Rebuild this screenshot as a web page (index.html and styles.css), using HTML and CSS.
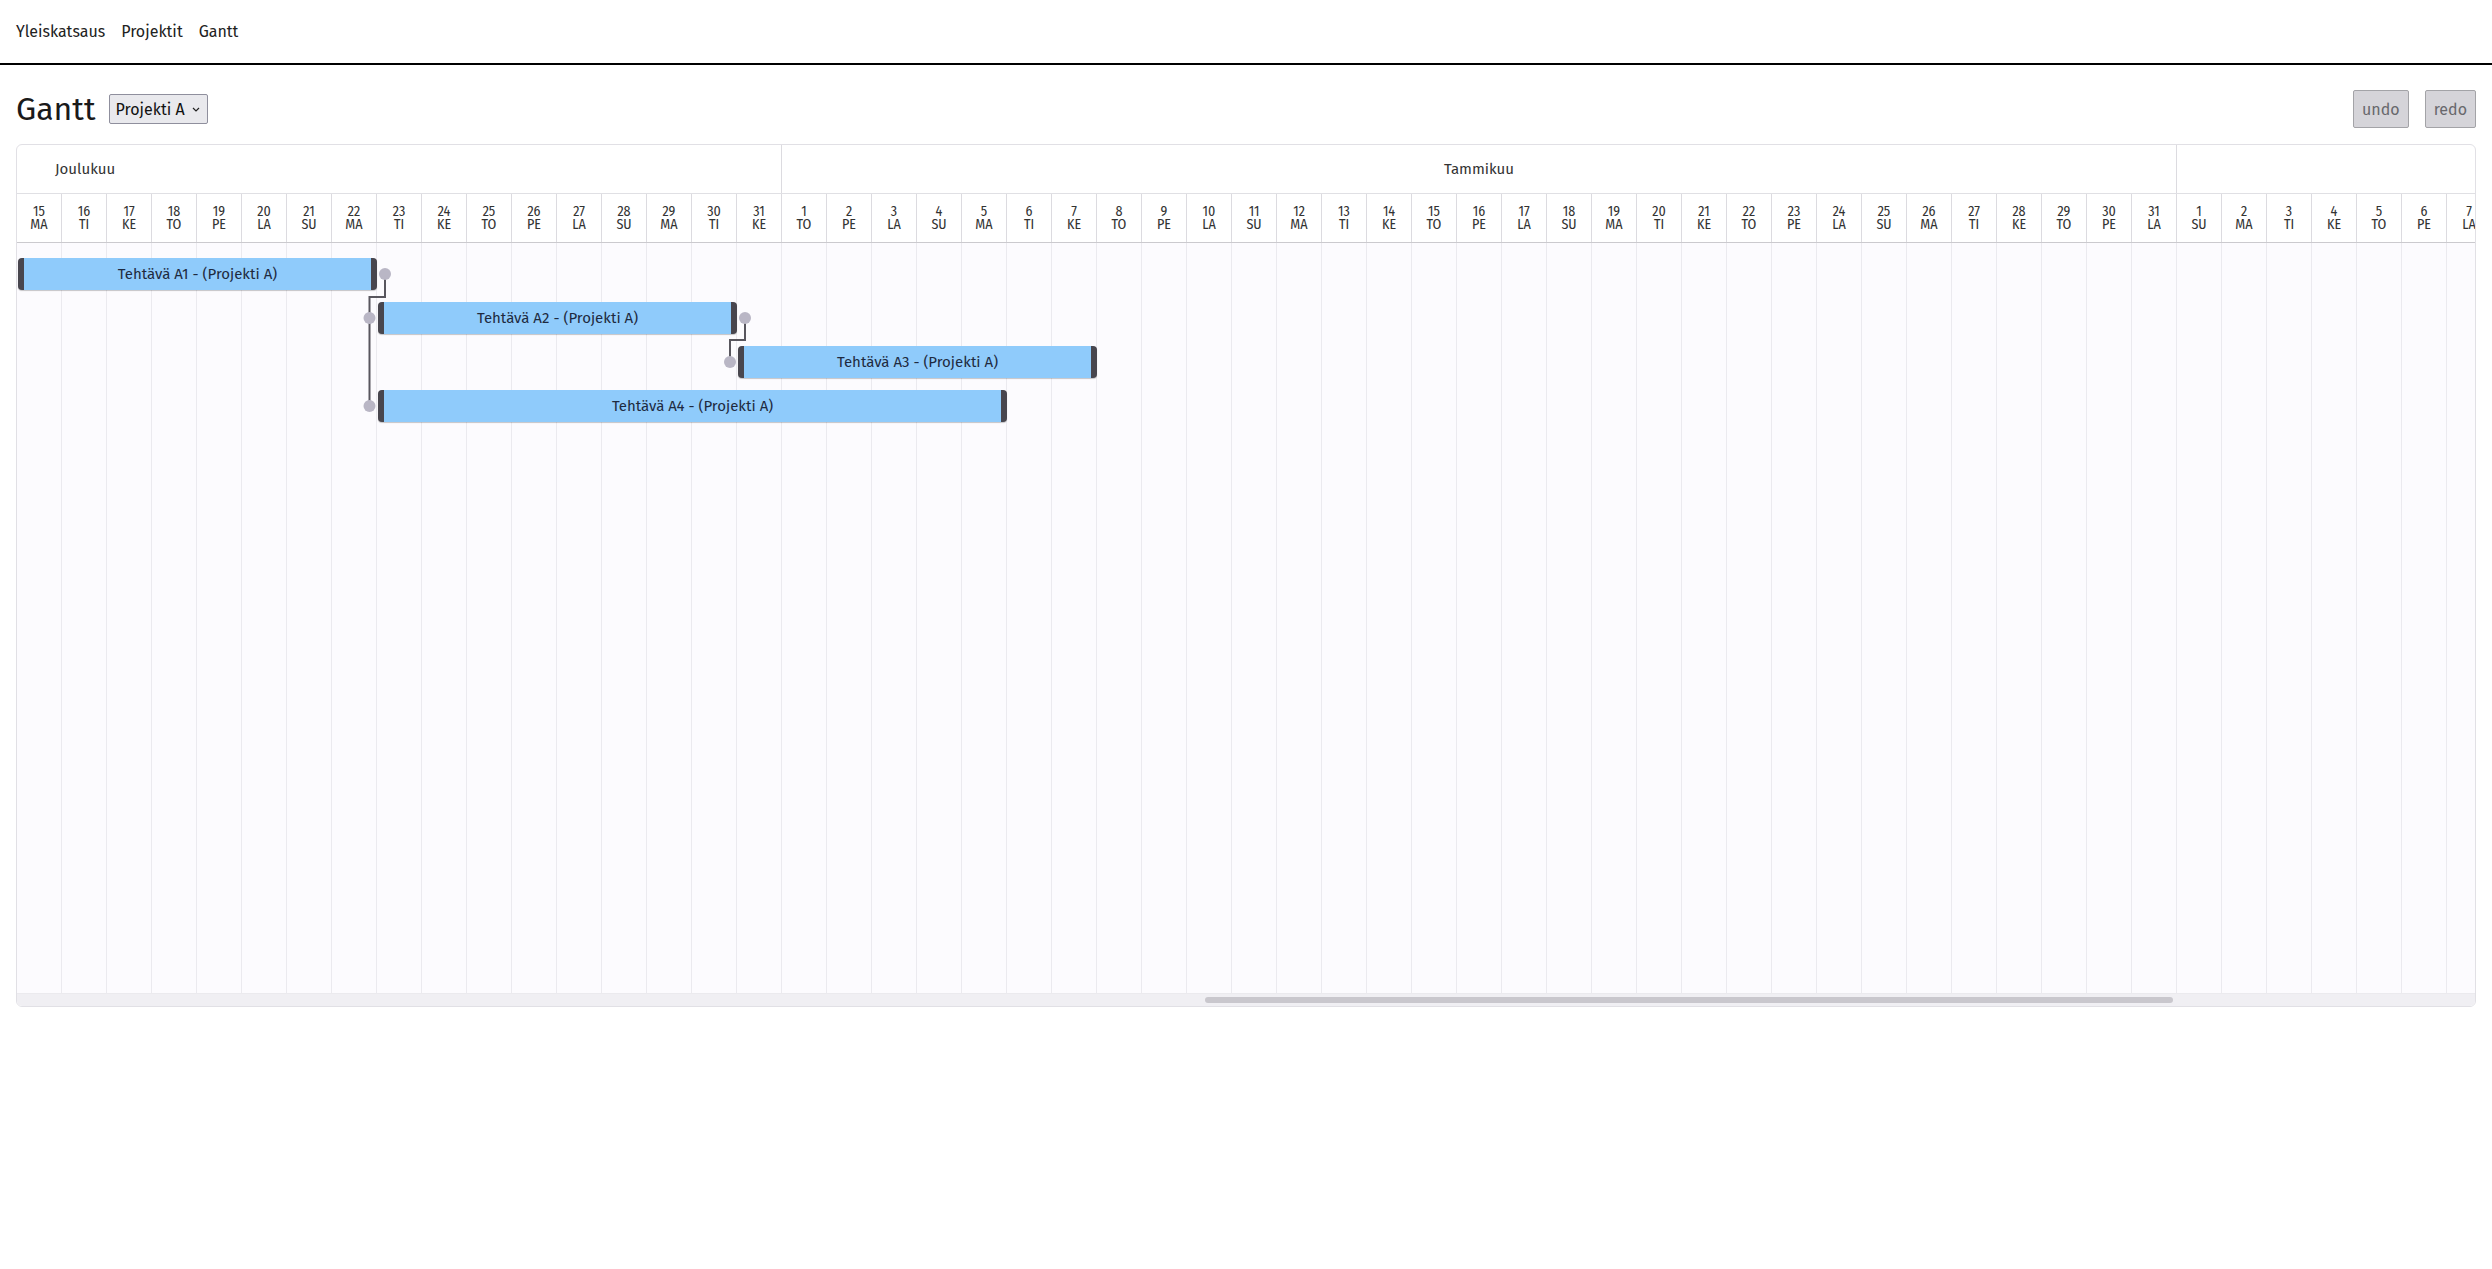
FILE: index.html
```html
<!DOCTYPE html>
<html lang="fi">
<head>
<meta charset="utf-8">
<title>Gantt</title>
<link rel="stylesheet" href="styles.css">
</head>
<body>
<nav class="topnav">
  <a href="#">Yleiskatsaus</a>
  <a href="#">Projektit</a>
  <a href="#">Gantt</a>
</nav>
<main class="page">
  <div class="toolbar">
    <h1 class="title">Gantt</h1>
    <select class="project-select"><option>Projekti A</option></select>
    <div class="spacer"></div>
    <button class="btn" disabled>undo</button>
    <button class="btn" disabled>redo</button>
  </div>
  <div class="gantt">
    <div class="gantt-scroll">
      <div class="months">
        <div class="month month-dec">Joulukuu</div>
        <div class="month month-jan">Tammikuu</div>
        <div class="month month-feb"></div>
      </div>
      <div class="days">
        <div class="day"><span class="dn">15</span><span class="dw">MA</span></div>
        <div class="day"><span class="dn">16</span><span class="dw">TI</span></div>
        <div class="day"><span class="dn">17</span><span class="dw">KE</span></div>
        <div class="day"><span class="dn">18</span><span class="dw">TO</span></div>
        <div class="day"><span class="dn">19</span><span class="dw">PE</span></div>
        <div class="day"><span class="dn">20</span><span class="dw">LA</span></div>
        <div class="day"><span class="dn">21</span><span class="dw">SU</span></div>
        <div class="day"><span class="dn">22</span><span class="dw">MA</span></div>
        <div class="day"><span class="dn">23</span><span class="dw">TI</span></div>
        <div class="day"><span class="dn">24</span><span class="dw">KE</span></div>
        <div class="day"><span class="dn">25</span><span class="dw">TO</span></div>
        <div class="day"><span class="dn">26</span><span class="dw">PE</span></div>
        <div class="day"><span class="dn">27</span><span class="dw">LA</span></div>
        <div class="day"><span class="dn">28</span><span class="dw">SU</span></div>
        <div class="day"><span class="dn">29</span><span class="dw">MA</span></div>
        <div class="day"><span class="dn">30</span><span class="dw">TI</span></div>
        <div class="day"><span class="dn">31</span><span class="dw">KE</span></div>
        <div class="day"><span class="dn">1</span><span class="dw">TO</span></div>
        <div class="day"><span class="dn">2</span><span class="dw">PE</span></div>
        <div class="day"><span class="dn">3</span><span class="dw">LA</span></div>
        <div class="day"><span class="dn">4</span><span class="dw">SU</span></div>
        <div class="day"><span class="dn">5</span><span class="dw">MA</span></div>
        <div class="day"><span class="dn">6</span><span class="dw">TI</span></div>
        <div class="day"><span class="dn">7</span><span class="dw">KE</span></div>
        <div class="day"><span class="dn">8</span><span class="dw">TO</span></div>
        <div class="day"><span class="dn">9</span><span class="dw">PE</span></div>
        <div class="day"><span class="dn">10</span><span class="dw">LA</span></div>
        <div class="day"><span class="dn">11</span><span class="dw">SU</span></div>
        <div class="day"><span class="dn">12</span><span class="dw">MA</span></div>
        <div class="day"><span class="dn">13</span><span class="dw">TI</span></div>
        <div class="day"><span class="dn">14</span><span class="dw">KE</span></div>
        <div class="day"><span class="dn">15</span><span class="dw">TO</span></div>
        <div class="day"><span class="dn">16</span><span class="dw">PE</span></div>
        <div class="day"><span class="dn">17</span><span class="dw">LA</span></div>
        <div class="day"><span class="dn">18</span><span class="dw">SU</span></div>
        <div class="day"><span class="dn">19</span><span class="dw">MA</span></div>
        <div class="day"><span class="dn">20</span><span class="dw">TI</span></div>
        <div class="day"><span class="dn">21</span><span class="dw">KE</span></div>
        <div class="day"><span class="dn">22</span><span class="dw">TO</span></div>
        <div class="day"><span class="dn">23</span><span class="dw">PE</span></div>
        <div class="day"><span class="dn">24</span><span class="dw">LA</span></div>
        <div class="day"><span class="dn">25</span><span class="dw">SU</span></div>
        <div class="day"><span class="dn">26</span><span class="dw">MA</span></div>
        <div class="day"><span class="dn">27</span><span class="dw">TI</span></div>
        <div class="day"><span class="dn">28</span><span class="dw">KE</span></div>
        <div class="day"><span class="dn">29</span><span class="dw">TO</span></div>
        <div class="day"><span class="dn">30</span><span class="dw">PE</span></div>
        <div class="day"><span class="dn">31</span><span class="dw">LA</span></div>
        <div class="day"><span class="dn">1</span><span class="dw">SU</span></div>
        <div class="day"><span class="dn">2</span><span class="dw">MA</span></div>
        <div class="day"><span class="dn">3</span><span class="dw">TI</span></div>
        <div class="day"><span class="dn">4</span><span class="dw">KE</span></div>
        <div class="day"><span class="dn">5</span><span class="dw">TO</span></div>
        <div class="day"><span class="dn">6</span><span class="dw">PE</span></div>
        <div class="day"><span class="dn">7</span><span class="dw">LA</span></div>
      </div>
      <div class="gantt-body">
        <div class="bar" style="grid-row: 1; grid-column: 1 / span 8;">Tehtävä A1 - (Projekti A)</div>
        <div class="bar" style="grid-row: 2; grid-column: 9 / span 8;">Tehtävä A2 - (Projekti A)</div>
        <div class="bar" style="grid-row: 3; grid-column: 17 / span 8;">Tehtävä A3 - (Projekti A)</div>
        <div class="bar" style="grid-row: 4; grid-column: 9 / span 14;">Tehtävä A4 - (Projekti A)</div>
        <svg class="links" width="2475" height="750" viewBox="0 0 2475 750">
          <path d="M368 31 V54 H352.5 V163" fill="none" stroke="#58565e" stroke-width="2"/>
          <path d="M728 75 V97 H713 V119" fill="none" stroke="#58565e" stroke-width="2"/>
          <circle cx="368" cy="31" r="6" fill="#b9b6c5"/>
          <circle cx="352.5" cy="75" r="6" fill="#b9b6c5"/>
          <circle cx="352.5" cy="163" r="6" fill="#b9b6c5"/>
          <circle cx="728" cy="75" r="6" fill="#b9b6c5"/>
          <circle cx="713" cy="119" r="6" fill="#b9b6c5"/>
        </svg>
      </div>
    </div>
    <div class="hscroll"><div class="thumb"></div></div>
  </div>
</main>
</body>
</html>
```

FILE: styles.css
```css
* { box-sizing: border-box; }

body {
  margin: 0;
  background: #ffffff;
  color: #222222;
  font-family: "Fira Sans", "Open Sans", "Noto Sans", sans-serif;
}

.topnav {
  display: flex;
  align-items: center;
  gap: 16px;
  height: 65px;
  padding: 0 16px;
  border-bottom: 2px solid #000000;
  font-size: 16px;
}

.topnav a {
  color: #222222;
  text-decoration: none;
}

.page {
  padding: 0 16px;
}

.toolbar {
  display: flex;
  align-items: center;
  height: 38px;
  margin-top: 25px;
  margin-bottom: 16px;
}

.title {
  margin: 0 14px 0 0;
  font-size: 32px;
  font-weight: 400;
  line-height: 38px;
  color: #1a1a1a;
}

.project-select {
  appearance: none;
  -webkit-appearance: none;
  width: 99px;
  height: 30px;
  padding: 0 18px 0 5px;
  font-family: inherit;
  font-size: 16px;
  color: #111111;
  background-color: #e9e9ed;
  background-image: url("data:image/svg+xml;utf8,<svg xmlns='http://www.w3.org/2000/svg' width='8' height='5' viewBox='0 0 8 5'><path d='M1 1 L4 4 L7 1' fill='none' stroke='%23222' stroke-width='1.2'/></svg>");
  background-repeat: no-repeat;
  background-position: right 7px center;
  border: 1px solid #8f8f9d;
  border-radius: 2px;
}

.spacer {
  flex: 1;
}

.btn {
  height: 38px;
  padding: 0 8px;
  font-family: inherit;
  font-size: 16px;
  font-weight: 400;
  color: #68686c;
  background: #d5d4d9;
  border: 1px solid #a3a3a7;
  border-radius: 2px;
}

.btn + .btn {
  margin-left: 16px;
}

.gantt {
  display: flex;
  flex-direction: column;
  height: 863px;
  border: 1px solid #e1e0e5;
  border-radius: 6px;
  overflow: hidden;
  background: #ffffff;
}

.gantt-scroll {
  flex: 1;
  overflow: hidden;
}

.months {
  display: flex;
  width: max-content;
  height: 49px;
  border-bottom: 1px solid #e0e0e4;
}

.month {
  flex: none;
  display: flex;
  align-items: center;
  border-right: 1px solid #dcdbe0;
  font-size: 15px;
  color: #333333;
}

.month-dec {
  width: 765px;
  padding-left: 38px;
}

.month-jan {
  width: 1395px;
  justify-content: center;
}

.month-feb {
  width: 1260px;
}

.days {
  display: flex;
  width: max-content;
  height: 49px;
  border-bottom: 1px solid #cbcace;
  box-shadow: 0 1px 1px rgba(0, 0, 0, 0.06);
  position: relative;
}

.day {
  flex: none;
  width: 45px;
  display: flex;
  flex-direction: column;
  align-items: center;
  justify-content: center;
  border-right: 1px solid #dcdbe0;
  font-family: "Fira Sans Condensed", "Fira Sans Extra Condensed", "Roboto Condensed", "Fira Sans", sans-serif;
  font-size: 14px;
  color: #333333;
}

.dn,
.dw {
  display: block;
  height: 13.5px;
  line-height: 13.5px;
}

.gantt-body {
  position: relative;
  display: grid;
  grid-template-columns: repeat(55, 45px);
  grid-auto-rows: 44px;
  align-content: start;
  width: 2475px;
  height: 750px;
  padding-top: 9px;
  background-color: #fcfbfe;
  background-image: repeating-linear-gradient(to right, transparent 0 44px, #ebeaef 44px 45px);
}

.bar {
  display: flex;
  align-items: center;
  justify-content: center;
  margin: 6px 0 6px 1px;
  background: #8fcbfb;
  border-left: 6px solid #48464e;
  border-right: 6px solid #48464e;
  border-radius: 4px;
  box-shadow: 0 1px 1px rgba(0, 0, 0, 0.22);
  font-size: 15px;
  color: #1e2a40;
  white-space: nowrap;
}

.links {
  position: absolute;
  left: 0;
  top: 0;
  pointer-events: none;
}

.hscroll {
  height: 13px;
  padding-top: 3px;
  background: #f0eff3;
  border-top: 1px solid #ebeaee;
}

.thumb {
  width: 968px;
  height: 6px;
  margin-left: 1188px;
  border-radius: 3px;
  background: #c9c7cd;
}
```
